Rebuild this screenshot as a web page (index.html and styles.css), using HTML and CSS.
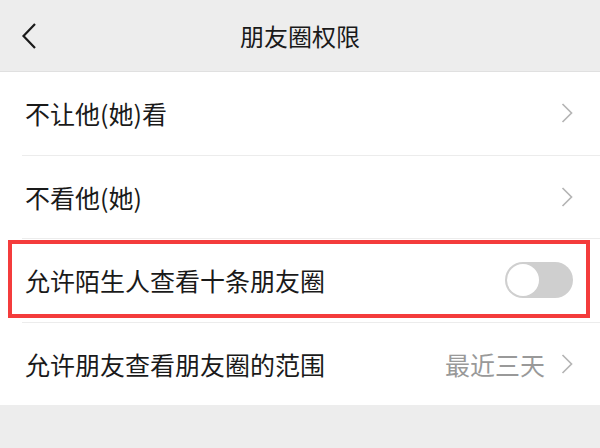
FILE: index.html
```html
<!DOCTYPE html>
<html lang="zh-CN">
<head>
    <meta charset="UTF-8">
    <meta name="viewport" content="width=device-width, initial-scale=1.0">
    <title>朋友圈权限</title>
    <link rel="stylesheet" href="styles.css">
</head>
<body>
    <div class="header">
        <svg class="back" width="16" height="26" viewBox="0 0 16 26">
            <path d="M14 1 L2.5 13 L14 25" fill="none" stroke="#1a1a1a" stroke-width="2.2"/>
        </svg>
        <div class="title">朋友圈权限</div>
    </div>

    <div class="list">
        <div class="row">
            <div class="label">不让他(她)看</div>
            <svg class="arrow" width="12" height="20" viewBox="0 0 12 20">
                <path d="M1.5 1 L10.5 10 L1.5 19" fill="none" stroke="#b5b5b5" stroke-width="1.7"/>
            </svg>
        </div>
        <div class="row">
            <div class="label">不看他(她)</div>
            <svg class="arrow" width="12" height="20" viewBox="0 0 12 20">
                <path d="M1.5 1 L10.5 10 L1.5 19" fill="none" stroke="#b5b5b5" stroke-width="1.7"/>
            </svg>
        </div>
        <div class="row highlight">
            <div class="label">允许陌生人查看十条朋友圈</div>
            <div class="switch"><div class="knob"></div></div>
        </div>
        <div class="row last">
            <div class="label">允许朋友查看朋友圈的范围</div>
            <div class="value">最近三天</div>
            <svg class="arrow" width="12" height="20" viewBox="0 0 12 20">
                <path d="M1.5 1 L10.5 10 L1.5 19" fill="none" stroke="#b5b5b5" stroke-width="1.7"/>
            </svg>
        </div>
    </div>
</body>
</html>
```

FILE: styles.css
```css
body {
    margin: 0;
    background-color: #ededed;
    font-family: "Noto Sans CJK SC", "Noto Sans", sans-serif;
    color: #1a1a1a;
}

.header {
    height: 71px;
    display: flex;
    align-items: center;
    justify-content: center;
    position: relative;
    border-bottom: 1px solid #e0e0e0;
}

.back {
    position: absolute;
    left: 21px;
    top: 23px;
}

.title {
    font-size: 24px;
}

.list {
    background-color: #fff;
}

.row {
    height: 82.5px;
    display: flex;
    align-items: center;
    padding: 0 27px 0 25px;
    position: relative;
}

.row::after {
    content: "";
    position: absolute;
    left: 22px;
    right: 0;
    bottom: -1px;
    height: 1px;
    background-color: #ececec;
}

.row + .row {
    margin-top: 1px;
}

.row.last::after {
    display: none;
}

.label {
    flex: 1;
    font-size: 25px;
}

.value {
    font-size: 25px;
    color: #999;
    margin-right: 16px;
}

.switch {
    width: 68px;
    height: 36px;
    border-radius: 18px;
    background-color: #cfcfcf;
    box-sizing: border-box;
    padding: 2px;
}

.knob {
    width: 32px;
    height: 32px;
    border-radius: 50%;
    background-color: #fff;
}

.highlight::before {
    content: "";
    position: absolute;
    left: 8px;
    right: 10px;
    top: 1px;
    bottom: 4px;
    border: 4px solid #f43c3c;
    pointer-events: none;
}
```
